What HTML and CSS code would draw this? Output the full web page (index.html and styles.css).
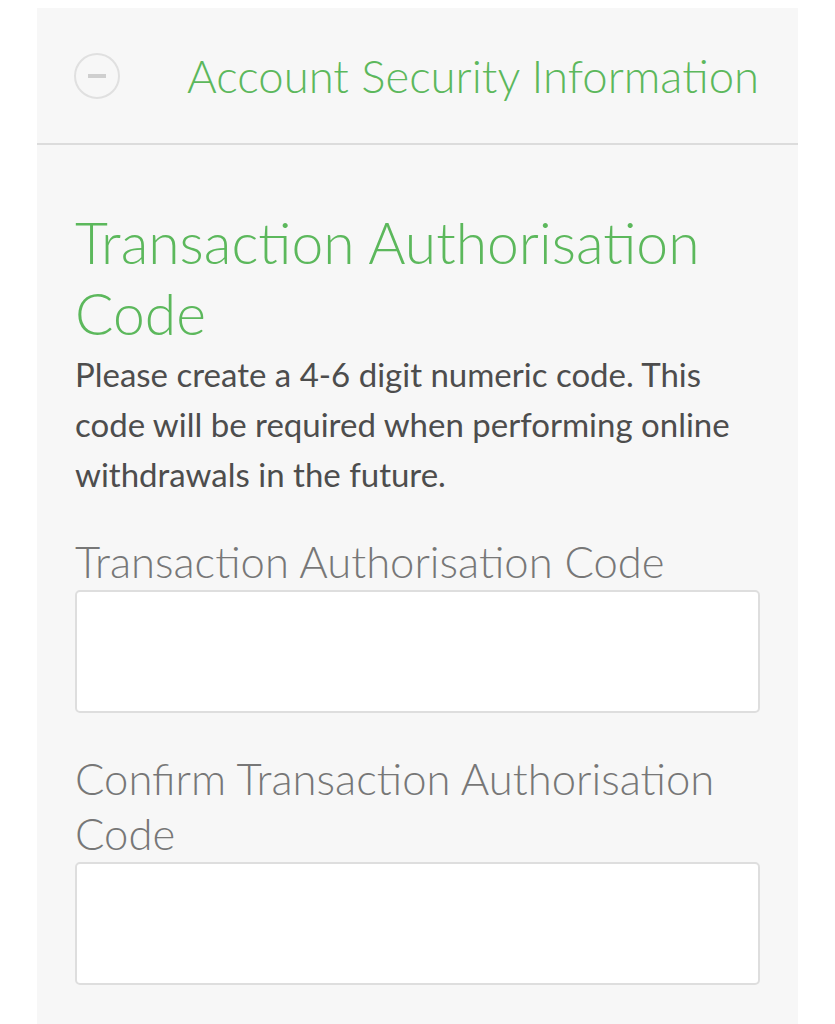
FILE: index.html
```html
<!DOCTYPE html>
<html lang="en">
<head>
  <meta charset="utf-8">
  <title>Account Security Information</title>
  <meta name="viewport" content="width=device-width, initial-scale=1">
  <link rel="stylesheet" href="styles.css">
</head>
<body>

<!-- Collapsible panel -->
<div class="panel">
  <div class="panel-head">
    <span class="toggle"><span class="bar"></span></span>
    <span class="panel-title">Account Security Information</span>
  </div>

  <div class="panel-body">
    <h2>Transaction Authorisation Code</h2>
    <p class="hint">Please create a 4-6 digit numeric code. This code will be required when performing online withdrawals in the future.</p>

    <label class="field-label" for="tac">Transaction Authorisation Code</label>
    <input class="field" id="tac" type="password">

    <label class="field-label" for="tac2">Confirm Transaction Authorisation Code</label>
    <input class="field" id="tac2" type="password">
  </div>
</div>

</body>
</html>
```

FILE: styles.css
```css
body {
  margin: 0;
  background-color: #fff;
  font-family: "Lato", sans-serif;
  font-weight: 300;
}

.panel {
  margin: 8px 37px 0 37px;
  background-color: #f7f7f7;
  min-height: 1016px;
}

.panel-head {
  display: flex;
  align-items: center;
  height: 135px;
  border-bottom: 2px solid #dcdcdc;
  padding-left: 37px;
}

.toggle {
  width: 42px;
  height: 42px;
  border: 2px solid #e0e0e0;
  border-radius: 50%;
  display: flex;
  align-items: center;
  justify-content: center;
  flex-shrink: 0;
}

.toggle .bar {
  width: 18px;
  height: 4px;
  background-color: #cfcfcf;
}

.panel-title {
  margin-left: 67px;
  font-size: 45.5px;
  color: #5cb85c;
}

.panel-body {
  padding: 62px 38px 20px 38px;
}

h2 {
  margin: 0;
  font-size: 57px;
  font-weight: 300;
  line-height: 71px;
  color: #5cb85c;
}

.hint {
  margin: 0 0 35px 0;
  font-size: 33px;
  line-height: 50px;
  color: #4d4d4d;
  font-weight: 400;
}

.field-label {
  display: block;
  font-size: 43.6px;
  line-height: 55px;
  color: #777;
  margin-bottom: 1px;
}

.field {
  display: block;
  box-sizing: border-box;
  width: 100%;
  height: 123px;
  margin: 0 0 38px 0;
  background-color: #fff;
  border: 2px solid #dedede;
  border-radius: 5px;
  font-size: 32px;
}
```
